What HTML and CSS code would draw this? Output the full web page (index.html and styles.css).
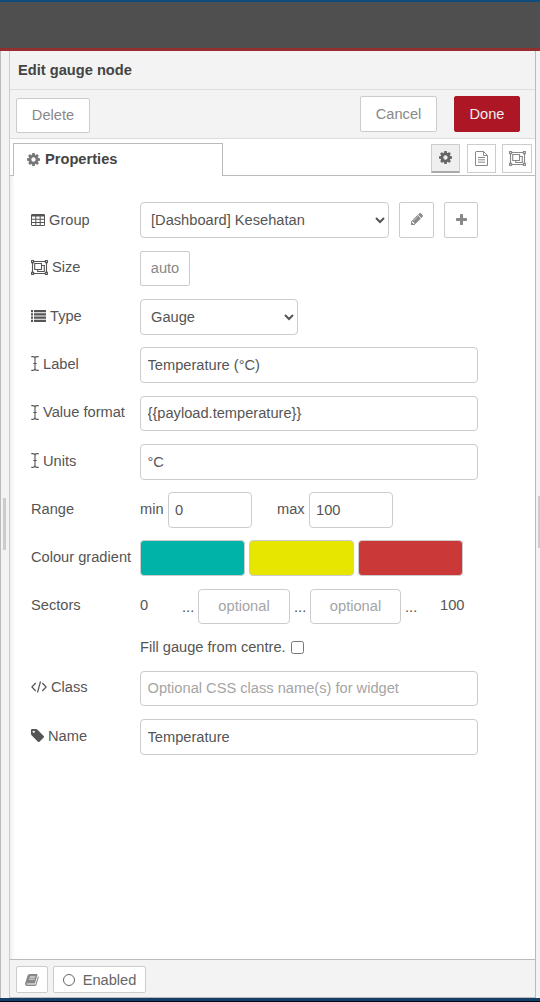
FILE: index.html
```html
<!DOCTYPE html>
<html lang="en">
<head>
<meta charset="utf-8">
<title>Edit gauge node</title>
<link rel="stylesheet" href="styles.css">
</head>
<body>
<svg class="defs" aria-hidden="true">
  <symbol id="cog" viewBox="128 128 1536 1536"><path d="M1152 896q0-106-75-181t-181-75-181 75-75 181 75 181 181 75 181-75 75-181zm512-109v222q0 12-8 23t-20 13l-185 28q-19 54-39 91 35 50 107 138 10 12 10 25t-9 23q-27 37-99 108t-94 71q-12 0-26-9l-138-108q-44 23-91 38-16 136-29 186-7 28-36 28h-222q-14 0-24.500-8.500t-11.500-21.500l-28-184q-49-16-90-37l-141 107q-10 9-25 9-14 0-25-11-126-114-165-168-7-10-7-23 0-12 8-23 15-21 51-66.500t54-70.500q-27-50-41-99l-183-27q-13-2-21-12.500t-8-23.500v-222q0-12 8-23t19-13l186-28q14-46 39-92-40-57-107-138-10-12-10-24 0-10 9-23 26-36 98.500-107.500t94.500-71.500q13 0 26 10l138 107q44-23 91-38 16-136 29-186 7-28 36-28h222q14 0 24.500 8.500t11.500 21.500l28 184q49 16 90 37l142-107q9-9 24-9 13 0 25 10 129 119 165 170 7 8 7 22 0 12-8 23-15 21-51 66.500t-54 70.500q26 50 41 98l183 28q13 2 21 12.500t8 23.500z"/></symbol>
  <symbol id="pencil" viewBox="128 149 1515 1515"><path d="M491 1536l91-91-235-235-91 91v107h128v128h107zm523-928q0-22-22-22-10 0-17 7l-542 542q-7 7-7 17 0 22 22 22 10 0 17-7l542-542q7-7 7-17zm-54-192l416 416-832 832h-416v-416zm683 96q0 53-37 90l-166 166-416-416 166-165q36-38 90-38 53 0 91 38l235 234q37 39 37 91z"/></symbol>
  <symbol id="plus" viewBox="192 128 1408 1408"><path d="M1600 736v192q0 40-28 68t-68 28h-416v416q0 40-28 68t-68 28h-192q-40 0-68-28t-28-68v-416h-416q-40 0-68-28t-28-68v-192q0-40 28-68t68-28h416v-416q0-40 28-68t68-28h192q40 0 68 28t28 68v416h416q40 0 68 28t28 68z"/></symbol>
  <symbol id="tag" viewBox="128 128 1515 1515"><path d="M576 448q0-53-37.500-90.500t-90.500-37.500-90.500 37.500-37.500 90.500 37.500 90.500 90.500 37.500 90.500-37.500 37.500-90.500zm1067 576q0 53-37 90l-491 492q-39 37-91 37-53 0-90-37l-715-716q-38-37-64.500-101t-26.500-117v-416q0-52 38-90t90-38h416q53 0 117 26.500t102 64.500l715 714q37 39 37 91z"/></symbol>
  <symbol id="table" viewBox="0 0 14 12"><path fill-rule="evenodd" d="M1.200 0h11.600Q14 0 14 1.200v9.600Q14 12 12.800 12H1.200Q0 12 0 10.800V1.200Q0 0 1.200 0zM1 2.500v2.200h3.300V2.500zm4.300 0v2.200h3.400V2.500zm4.400 0v2.200H13V2.500zM1 5.700v2.200h3.300V5.700zm4.300 0v2.200h3.400V5.700zm4.400 0v2.200H13V5.700zM1 8.900V11h3.300V8.900zm4.300 0V11h3.400V8.900zm4.400 0V11H13V8.900z"/></symbol>
  <symbol id="object-group" viewBox="0 0 17 15"><g fill="none" stroke="currentColor" stroke-width="1.100"><path d="M3 1.500h11M3 13.500h11M1.500 3v9M15.500 3v9M.6.6h2v2h-2zM14.400.6h2v2h-2zM.6 12.400h2v2h-2zM14.400 12.400h2v2h-2z"/><path d="M3.700 3.500h6.800v6H3.700zM10.500 5.500h2.800v6H6.700v-2"/></g></symbol>
  <symbol id="list" viewBox="0 0 15 12"><path d="M0 0h2v2.200H0zM3 0h12v2.200H3zM0 3.300h2v2.200H0zM3 3.300h12v2.200H3zM0 6.600h2v2.200H0zM3 6.600h12v2.200H3zM0 9.800h2V12H0zM3 9.800h12V12H3z"/></symbol>
  <symbol id="cursor" viewBox="0 0 8 15"><path fill="none" stroke="currentColor" stroke-width="1.100" d="M.3.6h1.500Q4 .6 4 2.500v10q0 1.900-2.200 1.900H.3M7.700.6H6.200Q4 .6 4 2.500v10q0 1.900 2.200 1.900h1.500M2.300 7.500h3.400"/></symbol>
  <symbol id="code" viewBox="0 0 16 12"><path fill="none" stroke="currentColor" stroke-width="1.200" d="M4.700 2L.9 6l3.800 4M11.300 2l3.800 4-3.800 4M9.500.5l-3 11"/></symbol>
  <symbol id="file" viewBox="0 0 13 15"><path fill="none" stroke="currentColor" d="M1 .5h7.500l4 4V14.500H.5V1zM8.500.5v4h4M3 6.500h7M3 8.800h7M3 11.200h7"/></symbol>
  <symbol id="book" viewBox="0 0 14 12"><path fill-rule="evenodd" d="M4.600 0h7q1.100 0 .8 1.100L10 9.400H2.600q-1.200 0-1 .7.200.4 1 .4h7.900L13 2.300q1 .4.700 1.300l-2.200 7.200Q11 12 9.900 12H2.200Q0 12 0 9.800L2.600 1.600Q3.200 0 4.600 0zM5 2.500l-.3.900h5.400l.3-.9zM4.300 4.700l-.3.900h5.400l.3-.9z"/></symbol>
</svg>

<div class="topbar"></div>
<div class="workspace">
  <div class="separator"><span class="grip"></span></div>
  <main class="tray">
    <header class="title">Edit gauge node</header>
    <div class="toolbar">
      <button class="btn delete">Delete</button>
      <button class="btn cancel">Cancel</button>
      <button class="btn done">Done</button>
    </div>
    <nav class="tabs">
      <div class="tab"><svg class="i13"><use href="#cog"/></svg>Properties</div>
      <div class="tab-fill"></div>
      <div class="tab-actions">
        <button class="btn small active"><svg class="i13"><use href="#cog"/></svg></button>
        <button class="btn small"><svg class="i-file"><use href="#file"/></svg></button>
        <button class="btn small wide"><svg class="i-group"><use href="#object-group"/></svg></button>
      </div>
    </nav>
    <form class="form">
      <div class="row">
        <label><svg class="i-table"><use href="#table"/></svg>Group</label>
        <select class="group"><option>[Dashboard] Kesehatan</option></select>
        <button type="button" class="btn edit"><svg class="i12"><use href="#pencil"/></svg></button>
        <button type="button" class="btn add"><svg class="i11"><use href="#plus"/></svg></button>
      </div>
      <div class="row short">
        <label class="up"><svg class="i-group"><use href="#object-group"/></svg>Size</label>
        <button type="button" class="btn auto">auto</button>
      </div>
      <div class="row">
        <label class="up"><svg class="i-list"><use href="#list"/></svg>Type</label>
        <select class="type"><option>Gauge</option></select>
      </div>
      <div class="row">
        <label class="up"><svg class="i-cursor"><use href="#cursor"/></svg>Label</label>
        <input class="full" value="Temperature (°C)">
      </div>
      <div class="row short">
        <label class="up"><svg class="i-cursor"><use href="#cursor"/></svg>Value format</label>
        <input class="full" value="{{payload.temperature}}">
      </div>
      <div class="row">
        <label class="up"><svg class="i-cursor"><use href="#cursor"/></svg>Units</label>
        <input class="full" value="°C">
      </div>
      <div class="row">
        <label class="up">Range</label>
        <span class="min up">min</span><input class="num" value="0">
        <span class="max up">max</span><input class="num" value="100">
      </div>
      <div class="row swatches">
        <label class="up">Colour gradient</label>
        <span class="swatch teal"></span><span class="swatch yellow"></span><span class="swatch red"></span>
      </div>
      <div class="row short">
        <label class="up">Sectors</label>
        <span class="from up">0</span><span class="dots first">...</span>
        <input class="sector" placeholder="optional">
        <span class="dots">...</span>
        <input class="sector last" placeholder="optional">
        <span class="dots">...</span><span class="to up">100</span>
      </div>
      <div class="row check"><span>Fill gauge from centre.</span><input type="checkbox"></div>
      <div class="row short">
        <label class="up"><svg class="i-code"><use href="#code"/></svg>Class</label>
        <input class="full" placeholder="Optional CSS class name(s) for widget">
      </div>
      <div class="row">
        <label class="up"><svg class="i13"><use href="#tag"/></svg>Name</label>
        <input class="full" value="Temperature">
      </div>
    </form>
    <footer class="footer">
      <button class="btn help"><svg class="i-book"><use href="#book"/></svg></button>
      <button class="btn enabled"><span class="ring"></span>Enabled</button>
    </footer>
  </main>
  <div class="sidebar"><span class="grip"></span></div>
</div>
<div class="bottombar"></div>
</body>
</html>
```
FILE: styles.css
```css
* { box-sizing: border-box; }
body {
  margin: 0;
  width: 540px;
  height: 1002px;
  display: flex;
  flex-direction: column;
  overflow: hidden;
  background: #f3f3f3;
  color: #555;
  font: 14.65px/20px "Liberation Sans", Arial, sans-serif;
}
.defs { position: absolute; width: 0; height: 0; }
svg { display: block; flex: none; fill: currentColor; }
.i11 { width: 11px; height: 11px; }
.i12 { width: 12px; height: 12px; }
.i13 { width: 13px; height: 13px; }
.i-table { width: 14px; height: 12px; }
.i-group { width: 17px; height: 15px; }
.i-list { width: 15px; height: 12px; }
.i-cursor { width: 8px; height: 15px; }
.i-code { width: 16px; height: 12px; }
.i-file { width: 13px; height: 15px; }
.i-book { width: 14px; height: 12px; }

.topbar {
  height: 51px;
  background: #4f4f4f;
  border-top: 2px solid #0f4b7c;
  border-bottom: 3px solid #942f2f;
}
.workspace { flex: 1; display: flex; min-height: 0; }
.separator { width: 9px; border-left: 1px solid #bbb; padding: 447px 0 0 2px; }
.grip { display: block; width: 3px; height: 52px; background: #ccc; }
.sidebar { width: 4px; padding: 445px 0 0 2px; }
.tray {
  width: 527px;
  display: flex;
  flex-direction: column;
  border: 1px solid #bbb;
  border-top: 0;
  border-left-color: #ccc;
}
.bottombar { height: 4px; background: #153f68; border-bottom: 1px solid #000814; }

.title { height: 39px; padding: 9px 8px; border-bottom: 1px solid #ddd; color: #444; font-weight: bold; }
.toolbar { height: 49px; padding: 6px 15px 0 6px; display: flex; border-bottom: 1px solid #ddd; }
.btn {
  display: flex;
  align-items: center;
  justify-content: center;
  padding: 0;
  border: 1px solid #ccc;
  border-radius: 2px;
  background: #fff;
  color: #888;
  font: inherit;
}
.delete { width: 74px; height: 35px; margin: 2px auto 0 0; padding-bottom: 1px; }
.cancel { width: 77px; height: 36px; }
.done { width: 66px; height: 36px; margin-left: 17px; background: #ad1625; border-color: #ad1625; color: #eee; }

.tabs { height: 37px; display: flex; background: #fff; }
.tabs::before { content: ""; width: 3px; border-bottom: 1px solid #bbb; }
.tab {
  width: 210px;
  margin-top: 4px;
  padding: 0 0 2px 13px;
  display: flex;
  align-items: center;
  gap: 5px;
  border: 1px solid #bbb;
  border-bottom: 0;
  color: #444;
  font-weight: bold;
}
.tab svg { color: #777; }
.tab-fill { flex: 1; border-bottom: 1px solid #bbb; }
.tab-actions { display: flex; gap: 7px; padding: 5px 3px 0 0; border-bottom: 1px solid #bbb; }
.small { width: 29px; height: 29px; border-radius: 0; padding-bottom: 1px; }
.wide { width: 30px; margin-left: -1px; }
.active { background: #efefef; border-bottom: 2px solid #aaa; color: #666; }

.form {
  flex: 1;
  padding: 26px 0 0 21px;
  background: #fff;
  box-shadow: inset 5px 0 5px -4px #e6e6e6;
  display: grid;
  grid-template-rows: 49px 48px 48px 49px 48px 48px 48px 49px 48px 34px 48px 48px;
  align-content: start;
}
.row { display: flex; height: 36px; align-items: center; }
.short { height: 35px; }
label { width: 109px; flex: none; display: flex; align-items: center; gap: 4px; white-space: nowrap; }
.up { padding-bottom: 3px; }
input, select {
  height: 36px;
  margin: 0;
  padding: 0 6.500px;
  border: 1px solid #ccc;
  border-radius: 4px;
  background: #fff;
  color: #555;
  font: inherit;
}
.short input { height: 35px; padding-bottom: 1px; }
input::placeholder { color: #a5a5a5; }
.full { width: 338px; }
.group { width: 249px; padding: 0 0 0 6px; }
.type { width: 158px; padding: 0 0 0 6px; }
.edit { width: 35px; height: 36px; margin-left: 10px; }
.add { width: 34px; height: 36px; margin-left: 10px; }
.edit svg, .add svg { margin-bottom: 2px; }
.auto { width: 50px; height: 35px; padding-bottom: 1px; }
.num { width: 84px; padding-left: 6px; }
.min { width: 28px; }
.max { width: 32px; margin-left: 25px; }
.swatches { gap: 4px; }
.swatches label { margin-right: -4px; }
.swatch { width: 105px; height: 36px; border: 1px solid #ccc; border-radius: 4px; }
.teal { background: #00b3a8; }
.yellow { background: #e6e600; }
.red { background: #ca3838; }
.from { width: 42px; }
.sector { width: 92px; text-align: center; }
.last { width: 91px; }
.dots { width: 20px; padding-left: 4px; }
.dots.first { width: 16px; padding-left: 0; }
.to { margin-left: 19px; }
.check { height: 20px; padding-left: 109px; gap: 5px; }
.check input { width: 13px; height: 13px; margin-top: 1px; }

.footer { height: 38px; padding: 6px 6px 0; display: flex; gap: 5px; border-top: 1px solid #bbb; }
.help { width: 32px; height: 27px; }
.enabled { width: 93px; height: 27px; gap: 8px; color: #666; }
.ring { width: 12px; height: 12px; border: 1px solid #666; border-radius: 50%; }
```
